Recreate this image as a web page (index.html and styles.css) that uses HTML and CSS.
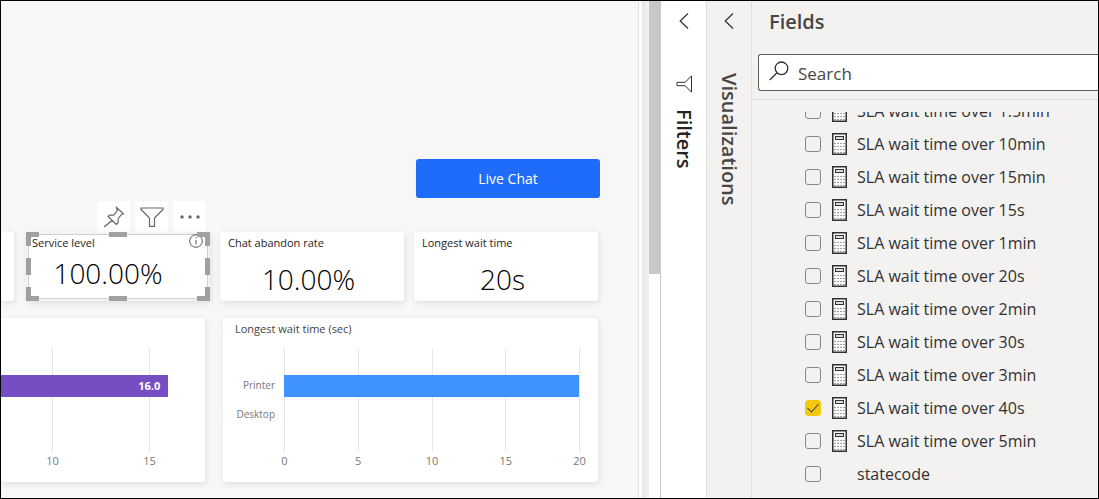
FILE: index.html
```html
<!DOCTYPE html>
<html lang="en">
<head>
    <meta charset="UTF-8">
    <meta name="viewport" content="width=device-width, initial-scale=1.0">
    <link rel="stylesheet" href="styles.css">
    <title>Live Chat report</title>
</head>
<body>
    <svg class="symbols" aria-hidden="true">
        <symbol id="calculator" viewBox="0 0 15 22">
            <rect x="0.75" y="0.75" width="13.5" height="20.5" fill="#fafafa" stroke="#323130" stroke-width="1.5"/>
            <rect x="3.5" y="3.5" width="8" height="3" fill="#ddd" stroke="#323130"/>
            <path d="M3 10.500h1M6 10.500h1M9 10.500h1M12 10.500h1M3 13.500h1M6 13.500h1M9 13.500h1M12 13.500h1M3 16.500h1M6 16.500h1M9 16.500h1M12 16.500h1M3 19.500h1M6 19.500h1M9 19.500h1M12 19.500h1" transform="translate(-0.5 0)" stroke="#484644" stroke-width="1.2"/>
        </symbol>
        <symbol id="chevron" viewBox="0 0 10 16">
            <path d="M9 0.5L1.2 8L9 15.5" fill="none" stroke="#323130" stroke-width="1.2"/>
        </symbol>
    </svg>

    <main class="report">
        <div class="canvas">
            <button class="live-btn">Live Chat</button>
            <div class="toolbar">
                <button aria-label="Pin visual">
                    <svg width="22" height="22" viewBox="0 0 22 22" fill="none" stroke="#666" stroke-width="1.2">
                        <path d="M13.5 1.5l7 6.2-2 .8-3.3 4.2-.3 4.6-1.6 1.2-8.2-8 1.5-1.5 4.2.2 3.5-4.5zM9.2 14.2L1.2 21"/>
                    </svg>
                </button>
                <button aria-label="Filters on visual">
                    <svg width="24" height="20" viewBox="0 0 24 20" fill="none" stroke="#666" stroke-width="1.2">
                        <path d="M1 1h22v1.5l-8.5 8.5v8.3h-5V11L1 2.500z"/>
                    </svg>
                </button>
                <button aria-label="More options">
                    <svg width="22" height="6" viewBox="0 0 22 6" fill="#666">
                        <circle cx="3" cy="3" r="1.700"/>
                        <circle cx="11" cy="3" r="1.700"/>
                        <circle cx="19" cy="3" r="1.700"/>
                    </svg>
                </button>
            </div>

            <div class="cards">
                <div class="card cut"></div>
                <div class="card selected">
                    <h3>Service level</h3>
                    <p>100.00%</p>
                    <svg class="info" width="14" height="14" viewBox="0 0 14 14" fill="none" stroke="#555">
                        <circle cx="7" cy="7" r="6.3"/>
                        <path d="M7 6v4.500M7 3.300v1.300"/>
                    </svg>
                    <span class="handle top left"></span>
                    <span class="handle top mid"></span>
                    <span class="handle top right"></span>
                    <span class="handle side left"></span>
                    <span class="handle side right"></span>
                    <span class="handle bottom left"></span>
                    <span class="handle bottom mid"></span>
                    <span class="handle bottom right"></span>
                </div>
                <div class="card">
                    <h3>Chat abandon rate</h3>
                    <p>10.00%</p>
                </div>
                <div class="card">
                    <h3>Longest wait time</h3>
                    <p>20s</p>
                </div>
            </div>

            <div class="charts">
                <section class="card chart chart-left">
                    <div class="plot">
                        <ul class="ticks">
                            <li>10</li>
                            <li>15</li>
                        </ul>
                        <div class="bars">
                            <div class="bar purple" style="width: 82%">16.0</div>
                        </div>
                    </div>
                </section>
                <section class="card chart chart-right">
                    <h3>Longest wait time (sec)</h3>
                    <ul class="names">
                        <li>Printer</li>
                        <li>Desktop</li>
                    </ul>
                    <div class="plot">
                        <ul class="ticks">
                            <li>0</li>
                            <li>5</li>
                            <li>10</li>
                            <li>15</li>
                            <li>20</li>
                        </ul>
                        <div class="bars">
                            <div class="bar blue" style="width: 99.500%"></div>
                        </div>
                    </div>
                </section>
            </div>
        </div>
        <div class="scrollbar"><div class="thumb"></div></div>
    </main>

    <aside class="pane filters">
        <button aria-label="Expand filters"><svg width="10" height="16"><use href="#chevron"/></svg></button>
        <svg class="funnel" width="17" height="18" viewBox="0 0 17 18" fill="none" stroke="#323130">
            <path d="M15.500 1v16L9 10.700H1V7.300h8z"/>
        </svg>
        <h2>Filters</h2>
    </aside>

    <aside class="pane visualizations">
        <button aria-label="Expand visualizations"><svg width="10" height="16"><use href="#chevron"/></svg></button>
        <h2>Visualizations</h2>
    </aside>

    <aside class="fields">
        <h2>Fields</h2>
        <div class="search">
            <svg width="20" height="20" viewBox="0 0 20 20" fill="none" stroke="#323130" stroke-width="1.300">
                <circle cx="12.500" cy="7.300" r="6.300"/>
                <path d="M8 11.800L0.800 19"/>
            </svg>
            <input type="text" placeholder="Search" aria-label="Search fields">
        </div>
        <div class="list">
            <ul>
                <li><label><input type="checkbox"><svg><use href="#calculator"/></svg>SLA wait time over 1.5min</label></li>
                <li><label><input type="checkbox"><svg><use href="#calculator"/></svg>SLA wait time over 10min</label></li>
                <li><label><input type="checkbox"><svg><use href="#calculator"/></svg>SLA wait time over 15min</label></li>
                <li><label><input type="checkbox"><svg><use href="#calculator"/></svg>SLA wait time over 15s</label></li>
                <li><label><input type="checkbox"><svg><use href="#calculator"/></svg>SLA wait time over 1min</label></li>
                <li><label><input type="checkbox"><svg><use href="#calculator"/></svg>SLA wait time over 20s</label></li>
                <li><label><input type="checkbox"><svg><use href="#calculator"/></svg>SLA wait time over 2min</label></li>
                <li><label><input type="checkbox"><svg><use href="#calculator"/></svg>SLA wait time over 30s</label></li>
                <li><label><input type="checkbox"><svg><use href="#calculator"/></svg>SLA wait time over 3min</label></li>
                <li><label><input type="checkbox" checked><svg><use href="#calculator"/></svg>SLA wait time over 40s</label></li>
                <li><label><input type="checkbox"><svg><use href="#calculator"/></svg>SLA wait time over 5min</label></li>
                <li><label><input type="checkbox"><svg></svg>statecode</label></li>
            </ul>
        </div>
    </aside>
</body>
</html>
```
FILE: styles.css
```css
* {
    box-sizing: border-box;
}

body {
    font-family: "Segoe UI", "Open Sans", sans-serif;
    margin: 0;
    height: 100vh;
    border: 1px solid #000;
    display: flex;
    overflow: hidden;
    color: #252423;
    background-color: #fff;
}

h2, h3, p, ul {
    margin: 0;
    padding: 0;
}

ul {
    list-style: none;
}

button {
    font-family: inherit;
    border: none;
    padding: 0;
    background: none;
    cursor: pointer;
}

svg {
    display: block;
    flex: none;
}

.symbols {
    position: absolute;
    width: 0;
    height: 0;
}

/* report */
.report {
    flex: 1;
    min-width: 0;
    display: flex;
    background: linear-gradient(to left, #fff 12px, #f2f2f2 12px, #e8e8e8 19px, #fcfcfc 19px);
}

.canvas {
    flex: 1;
    min-width: 0;
    margin-right: 10px;
    padding: 158px 40px 0 0;
    border-right: 1px solid #e2e2e2;
    background-color: #f7f7f7;
    display: flex;
    flex-direction: column;
}

.live-btn {
    align-self: flex-end;
    width: 184px;
    height: 39px;
    margin-right: -2px;
    border-radius: 3px;
    background-color: #1f6cfa;
    color: #fff;
    font-size: 14px;
}

.toolbar {
    display: flex;
    gap: 5px;
    margin: 3px 0 0 96px;
}

.toolbar button {
    width: 33px;
    height: 31px;
    display: flex;
    align-items: center;
    justify-content: center;
    background-color: #fff;
}

.cards {
    display: grid;
    grid-template-columns: 15px 1fr 1fr 1fr;
    gap: 10px;
}

.card {
    height: 69px;
    border-radius: 3px;
    background-color: #fff;
    box-shadow: 1px 2px 6px rgba(0, 0, 0, 0.1);
}

.card h3 {
    padding: 3px 8px 0;
    font-size: 11px;
    line-height: 16px;
    font-weight: 400;
}

.card p {
    text-align: center;
    font-size: 28px;
    line-height: 40px;
    font-weight: 300;
    color: #000;
    padding-top: 8px;
    padding-right: 7px;
}

.cards .cut {
    margin-right: 2px;
}

.card.selected {
    position: relative;
    box-shadow: inset 0 0 0 2px #f4f4f4, inset 0 0 0 3px #d0d0d0, 1px 2px 6px rgba(0, 0, 0, 0.1);
}

.card.selected h3 {
    padding-left: 6px;
}

.card.selected p {
    padding-top: 2px;
    padding-right: 20px;
}

.info {
    position: absolute;
    top: 2px;
    right: 7px;
}

.handle {
    position: absolute;
    width: 13px;
    height: 14px;
    border: 0 solid #a0a0a0;
}

.top { top: 0; border-top-width: 5px; }
.bottom { bottom: 0; border-bottom-width: 5px; }
.left { left: 0; border-left-width: 5px; }
.right { right: 0; border-right-width: 5px; }

.handle.mid {
    left: calc(50% - 9px);
    width: 18px;
    height: 5px;
}

.handle.side {
    top: 26px;
    width: 5px;
    height: 17px;
}

.charts {
    display: grid;
    grid-template-columns: 204fr 375fr;
    gap: 18px;
    padding-top: 17px;
}

.chart {
    height: 164px;
    font-size: 11px;
    color: #777;
}

.chart-right {
    display: grid;
    grid-template-columns: 52px 1fr;
    grid-template-rows: 31px 1fr;
    column-gap: 9px;
    padding-right: 18px;
}

.chart-right h3 {
    grid-column: 1 / 3;
    padding-left: 12px;
    color: #444;
}

.names {
    padding-top: 22px;
    text-align: right;
    line-height: 29px;
    font-size: 10px;
}

.plot {
    display: grid;
}

.ticks,
.bars {
    grid-area: 1 / 1;
}

.ticks {
    display: flex;
    justify-content: space-between;
}

.ticks li {
    width: 1px;
    height: 102px;
    padding-top: 102px;
    line-height: 20px;
    display: flex;
    justify-content: center;
    background-color: #e6e6e6;
}

.bars {
    padding-top: 26px;
}

.bar {
    height: 22px;
    line-height: 22px;
    padding-right: 8px;
    text-align: right;
    font-weight: 700;
    color: #fff;
}

.chart-left {
    padding-top: 31px;
}

.chart-left .ticks {
    padding: 0 55px 0 51px;
}

.purple { background-color: #744ec2; }
.blue { background-color: #4092ff; }

.scrollbar {
    width: 12px;
    border-right: 1px solid #c8c8c8;
}

.thumb {
    width: 12px;
    height: 55%;
    background-color: #c8c8c8;
}

/* collapsed panes */
.pane {
    width: 46px;
    display: flex;
    flex-direction: column;
    align-items: center;
    padding-top: 12px;
    border-right: 1px solid #e1dfdd;
}

.pane h2 {
    writing-mode: vertical-rl;
    font-size: 20px;
    line-height: 28px;
    font-weight: 600;
}

.funnel {
    margin: 46px 0 16px 2px;
}

.visualizations {
    width: 45px;
    color: #484644;
    background-color: #f3f2f1;
}

.visualizations h2 {
    margin-top: 44px;
}

/* fields */
.fields {
    width: 346px;
    display: flex;
    flex-direction: column;
    color: #323130;
    background-color: #f3f2f1;
}

.fields h2 {
    padding: 7px 17px 18px;
    font-size: 20px;
    line-height: 28px;
    font-weight: 600;
    color: #484644;
}

.search {
    display: flex;
    align-items: center;
    height: 37px;
    margin-left: 6px;
    padding-left: 10px;
    border: 1px solid #605e5c;
    border-right: none;
    border-radius: 3px 0 0 3px;
    background-color: #fff;
}

.search svg {
    margin-bottom: 4px;
}

.search input {
    flex: 1;
    min-width: 0;
    margin-left: 8px;
    padding: 2px 0 0 1px;
    border: none;
    outline: none;
    background: none;
    font-family: inherit;
    font-size: 17px;
}

.search input::placeholder {
    color: #484644;
}

.list {
    flex: 1;
    min-height: 0;
    margin-top: 8px;
    padding-top: 12px;
    border-top: 1px solid #dddbd9;
    overflow: hidden;
}

.list ul {
    height: 100%;
    overflow: hidden;
}

.list li:first-child {
    margin-top: -18px;
}

.list label {
    display: flex;
    align-items: center;
    height: 33px;
    padding-left: 53px;
    font-size: 16px;
}

.list svg {
    width: 15px;
    height: 22px;
    margin: 0 10px 0 11px;
}

.list input {
    appearance: none;
    flex: none;
    width: 16px;
    height: 16px;
    margin: 0;
    border: 1px solid #8a8886;
    border-radius: 3px;
    display: flex;
    justify-content: center;
}

.list input:checked {
    border-color: #f2c811;
    background-color: #f2c811;
}

.list input:checked::before {
    content: "";
    width: 5px;
    height: 10px;
    border: solid #484644;
    border-width: 0 1px 1px 0;
    transform: rotate(42deg);
}
```
